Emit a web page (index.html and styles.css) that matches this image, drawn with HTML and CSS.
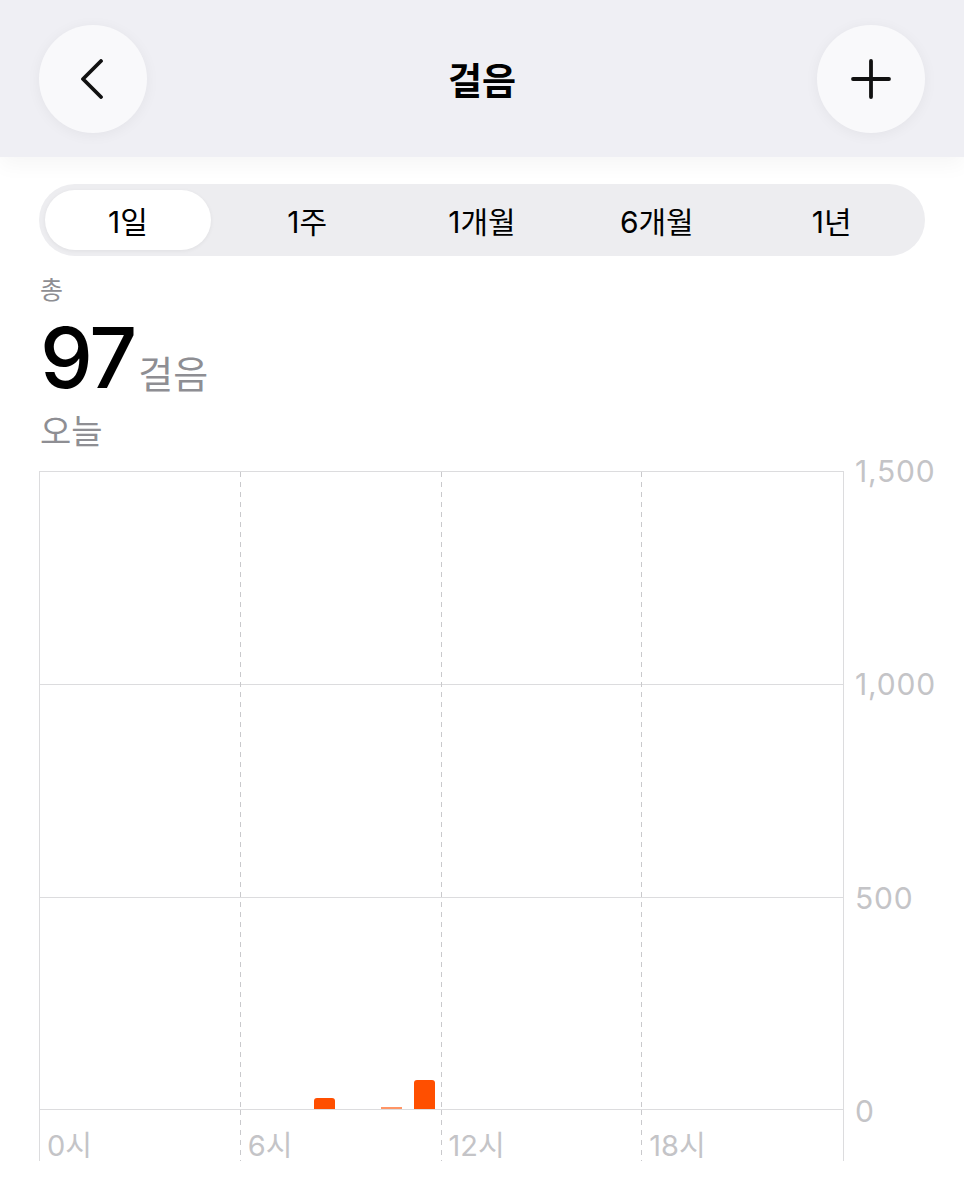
FILE: index.html
```html
<!DOCTYPE html>
<html lang="ko">
<head>
  <meta charset="UTF-8">
  <title>걸음</title>
  <link rel="stylesheet" href="styles.css">
</head>
<body>
  <header class="nav">
    <button class="round-btn" aria-label="뒤로">
      <svg width="40" height="40" viewBox="0 0 40 40"><path d="M28 2 L10 20 L28 38" fill="none" stroke="#111" stroke-width="3.8" stroke-linecap="round" stroke-linejoin="round"/></svg>
    </button>
    <h1 class="nav-title">걸음</h1>
    <button class="round-btn" aria-label="추가">
      <svg width="40" height="40" viewBox="0 0 40 40"><path d="M20 2 V38 M2 20 H38" fill="none" stroke="#111" stroke-width="3.8" stroke-linecap="round"/></svg>
    </button>
  </header>

  <div class="segmented">
    <div class="seg selected">1일</div>
    <div class="seg">1주</div>
    <div class="seg">1개월</div>
    <div class="seg">6개월</div>
    <div class="seg">1년</div>
  </div>

  <div class="summary">
    <div class="summary-label">총</div>
    <div class="summary-value"><span class="big">97</span><span class="unit">걸음</span></div>
    <div class="summary-date">오늘</div>
  </div>

  <div class="chart">
    <div class="plot">
      <div class="area">
        <div class="col"></div>
        <div class="col"></div>
        <div class="col"></div>
        <div class="col last"></div>
        <div class="bars">
          <div class="slot"></div><div class="slot"></div><div class="slot"></div><div class="slot"></div>
          <div class="slot"></div><div class="slot"></div><div class="slot"></div><div class="slot"></div>
          <div class="slot"><div class="bar" style="height: 11px"></div></div>
          <div class="slot"></div>
          <div class="slot"><div class="bar thin" style="height: 2px"></div></div>
          <div class="slot"><div class="bar" style="height: 29px"></div></div>
          <div class="slot"></div><div class="slot"></div><div class="slot"></div><div class="slot"></div>
          <div class="slot"></div><div class="slot"></div><div class="slot"></div><div class="slot"></div>
          <div class="slot"></div><div class="slot"></div><div class="slot"></div><div class="slot"></div>
        </div>
      </div>
      <div class="x-axis">
        <div class="col">0시</div>
        <div class="col">6시</div>
        <div class="col">12시</div>
        <div class="col last">18시</div>
      </div>
    </div>
    <div class="y-axis">
      <span>1,500</span>
      <span>1,000</span>
      <span>500</span>
      <span>0</span>
    </div>
  </div>
</body>
</html>
```

FILE: styles.css
```css
* {
  box-sizing: border-box;
}

body {
  margin: 0;
  background: #fff;
  font-family: Inter, "Noto Sans CJK KR", sans-serif;
  color: #000;
  overflow: hidden;
}

.nav {
  height: 157px;
  background: #efeff4;
  display: flex;
  align-items: center;
  justify-content: space-between;
  padding: 0 39px;
  box-shadow: 0 8px 20px rgba(0, 0, 0, 0.04);
  position: relative;
}

.round-btn {
  width: 108px;
  height: 108px;
  border: none;
  border-radius: 50%;
  background: #f9f9fb;
  box-shadow: 0 2px 14px rgba(0, 0, 0, 0.05);
  display: flex;
  align-items: center;
  justify-content: center;
  padding: 0;
}

.nav-title {
  margin: 0;
  font-size: 37px;
  font-weight: 600;
  font-family: "Noto Sans CJK KR", sans-serif;
}

.segmented {
  margin: 27px 39px 0;
  height: 72px;
  border-radius: 36px;
  background: #ededf0;
  padding: 6px;
  display: grid;
  grid-template-columns: repeat(5, 1fr);
}

.seg {
  display: flex;
  align-items: center;
  justify-content: center;
  font-size: 30px;
  font-weight: 400;
  border-radius: 30px;
}

.seg.selected {
  background: #fff;
  margin-right: 9px;
  box-shadow: 0 1px 4px rgba(0, 0, 0, 0.06);
}

.summary {
  padding: 0 40px;
}

.summary-label {
  margin-top: 19px;
  font-size: 25px;
  line-height: 30px;
  color: #8e8e93;
}

.summary-value {
  display: flex;
  align-items: baseline;
  margin-top: 15px;
  height: 76px;
}

.big {
  font-size: 84px;
  line-height: 76px;
  font-weight: 500;
  letter-spacing: -2px;
}

.unit {
  margin-left: 3px;
  font-size: 38px;
  color: #8e8e93;
  font-family: "Noto Sans CJK KR", sans-serif;
}

.summary-date {
  font-size: 34px;
  line-height: 46px;
  color: #8e8e93;
  margin-top: 13px;
}

.chart {
  display: flex;
  margin-top: 16px;
  padding-left: 39px;
}

.plot {
  width: 805px;
  border-left: 1px solid #dcdcde;
  border-right: 1px solid #dcdcde;
}

.area {
  height: 639px;
  display: grid;
  grid-template-columns: repeat(4, 1fr);
  border-top: 1px solid #dcdcde;
  border-bottom: 1px solid #dcdcde;
  background:
    linear-gradient(#dcdcde, #dcdcde) 0 212px / 100% 1px no-repeat,
    linear-gradient(#dcdcde, #dcdcde) 0 425px / 100% 1px no-repeat;
  position: relative;
}

.col {
  background: repeating-linear-gradient(#c9c9cc 0 5px, transparent 5px 10px) right top / 1px 100% no-repeat;
}

.col.last {
  background: none;
}

.bars {
  position: absolute;
  inset: 0;
  display: flex;
  align-items: flex-end;
}

.slot {
  flex: 1;
  display: flex;
  justify-content: center;
}

.bar {
  width: 21px;
  background: #ff4f00;
  border-radius: 3px 3px 0 0;
}

.bar.thin {
  border-radius: 0;
  opacity: 0.6;
}

.x-axis {
  height: 51px;
  display: grid;
  grid-template-columns: repeat(4, 1fr);
}

.x-axis .col {
  font-size: 29px;
  color: #c4c4c7;
  padding: 12px 0 0 7px;
}

.y-axis {
  margin-top: -16px;
  height: 672px;
  display: flex;
  flex-direction: column;
  justify-content: space-between;
  padding-left: 11px;
}

.y-axis span {
  font-size: 30px;
  line-height: 32px;
  letter-spacing: 0.8px;
  color: #c4c4c7;
}
```
